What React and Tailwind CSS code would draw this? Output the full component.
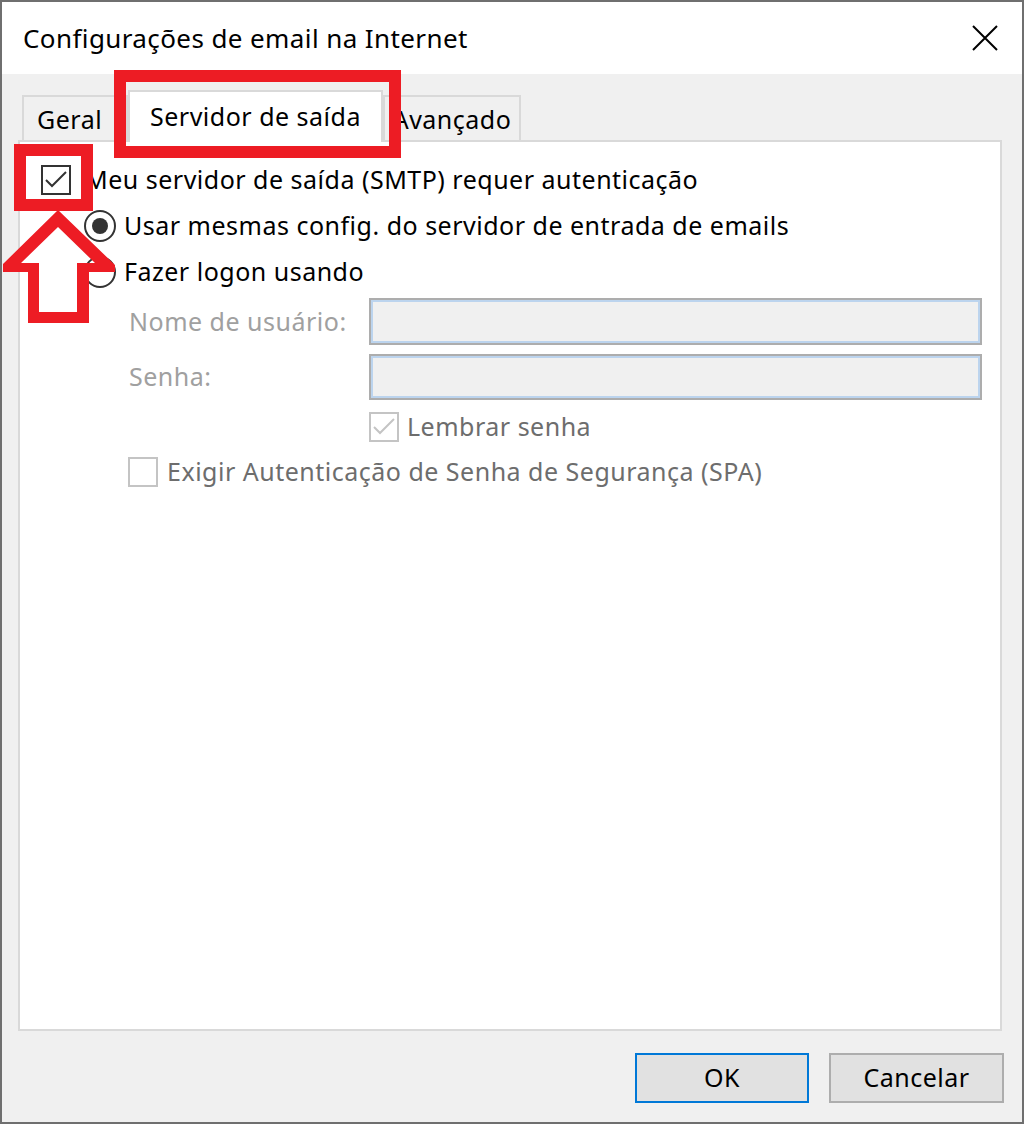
import React from "react";

const font = { fontFamily: '"Noto Sans", "Open Sans", sans-serif' };

function CheckBox({ checked, disabled, className = "" }) {
  const border = disabled ? "border-[#c4c4c4]" : "border-[#333333]";
  const stroke = disabled ? "#c4c4c4" : "#333333";
  return (
    <div className={`w-[30px] h-[30px] border-2 ${border} bg-white flex items-center justify-center shrink-0 ${className}`}>
      {checked && (
        <svg width="26" height="26" viewBox="0 0 26 26">
          <polyline points="3,13 9,19 23,5" fill="none" stroke={stroke} strokeWidth="2" />
        </svg>
      )}
    </div>
  );
}

function Radio({ selected }) {
  return (
    <div className="w-[32px] h-[32px] rounded-full border-2 border-[#333333] bg-white flex items-center justify-center shrink-0">
      {selected && <div className="w-[16px] h-[16px] rounded-full bg-[#333333]" />}
    </div>
  );
}

function Field() {
  return (
    <div className="flex-1 h-full border-2 border-[#adadad] bg-[#f0f0f0] shadow-[inset_0_0_0_2px_#bcd4ee]" />
  );
}

export default function App() {
  return (
    <div className="relative w-[1024px] h-[1124px] overflow-hidden" style={font}>
      <div className="w-full h-full border-2 border-[#6f6f6f] bg-[#f0f0f0] flex flex-col">
        {/* title bar */}
        <div className="h-[72px] bg-white flex items-center justify-between pl-[21px] pr-[24px]">
          <span className="text-[26px] tracking-[0.4px] text-black">Configurações de email na Internet</span>
          <svg width="26" height="26" viewBox="0 0 26 26">
            <path d="M1 1 L25 25 M25 1 L1 25" stroke="#000" strokeWidth="2" />
          </svg>
        </div>

        <div className="flex-1 flex flex-col pl-[16px] pr-[20px] text-[25px] tracking-[0.5px]">
          {/* tabs */}
          <div className="flex items-end h-[66px] pl-[4px]">
            <div className="w-[106px] h-[45px] border-2 border-b-0 border-[#d9d9d9] bg-[#f0f0f0] flex items-center pl-[13px] text-black pt-[2px]">
              Geral
            </div>
            <div className="relative z-10 -mb-[2px] w-[255px] h-[52px] border-2 border-b-0 border-[#d9d9d9] bg-white flex items-center justify-center text-black">
              Servidor de saída
            </div>
            <div className="w-[138px] h-[45px] border-2 border-b-0 border-[#d9d9d9] bg-[#f0f0f0] flex items-center justify-center text-black pt-[2px]">
              Avançado
            </div>
          </div>

          {/* panel */}
          <div className="h-[891px] border-2 border-[#d9d9d9] bg-white flex flex-col pt-[14px] pr-[18px]">
            <div className="h-[47px] flex items-center pl-[21px] gap-[14px]">
              <CheckBox checked />
              <span className="text-black">Meu servidor de saída (SMTP) requer autenticação</span>
            </div>
            <div className="h-[46px] flex items-center pl-[64px] gap-[8px]">
              <Radio selected />
              <span className="text-black">Usar mesmas config. do servidor de entrada de emails</span>
            </div>
            <div className="h-[46px] flex items-center pl-[64px] gap-[8px]">
              <Radio />
              <span className="text-black">Fazer logon usando</span>
            </div>
            <div className="mt-[3px] h-[47px] flex items-center pl-[109px]">
              <span className="w-[240px] text-[#a0a0a0]">Nome de usuário:</span>
              <Field />
            </div>
            <div className="mt-[9px] h-[46px] flex items-center pl-[109px]">
              <span className="w-[240px] text-[#a0a0a0]">Senha:</span>
              <Field />
            </div>
            <div className="mt-[12px] h-[30px] flex items-center pl-[349px] gap-[8px]">
              <CheckBox checked disabled />
              <span className="text-[#6d6d6d]">Lembrar senha</span>
            </div>
            <div className="mt-[15px] h-[30px] flex items-center pl-[108px] gap-[9px]">
              <CheckBox disabled />
              <span className="text-[#6d6d6d]">Exigir Autenticação de Senha de Segurança (SPA)</span>
            </div>
          </div>

          {/* buttons */}
          <div className="flex justify-end gap-[20px] mt-[22px] -mr-[2px]">
            <button className="w-[174px] h-[50px] border-2 border-[#0078d7] bg-[#e1e1e1] text-black">OK</button>
            <button className="w-[175px] h-[50px] border-2 border-[#adadad] bg-[#e1e1e1] text-black">Cancelar</button>
          </div>
        </div>
      </div>

      {/* annotations */}
      <div className="absolute left-[114px] top-[70px] w-[287px] h-[88px] border-[12px] border-[#ed1c24]" />
      <div className="absolute left-[14px] top-[144px] w-[79px] h-[67px] border-[12px] border-[#ed1c24]" />
      <svg className="absolute left-0 top-0" width="130" height="340" viewBox="0 0 130 340">
        <path
          fillRule="evenodd"
          fill="#ed1c24"
          d="M58 210 L115 265 L115 272 L89 272 L89 323 L28 323 L28 272 L3 272 L3 264 Z M58 227 L95 263 L77 263 L77 312 L39 312 L39 263 L21 263 Z"
        />
      </svg>
    </div>
  );
}
